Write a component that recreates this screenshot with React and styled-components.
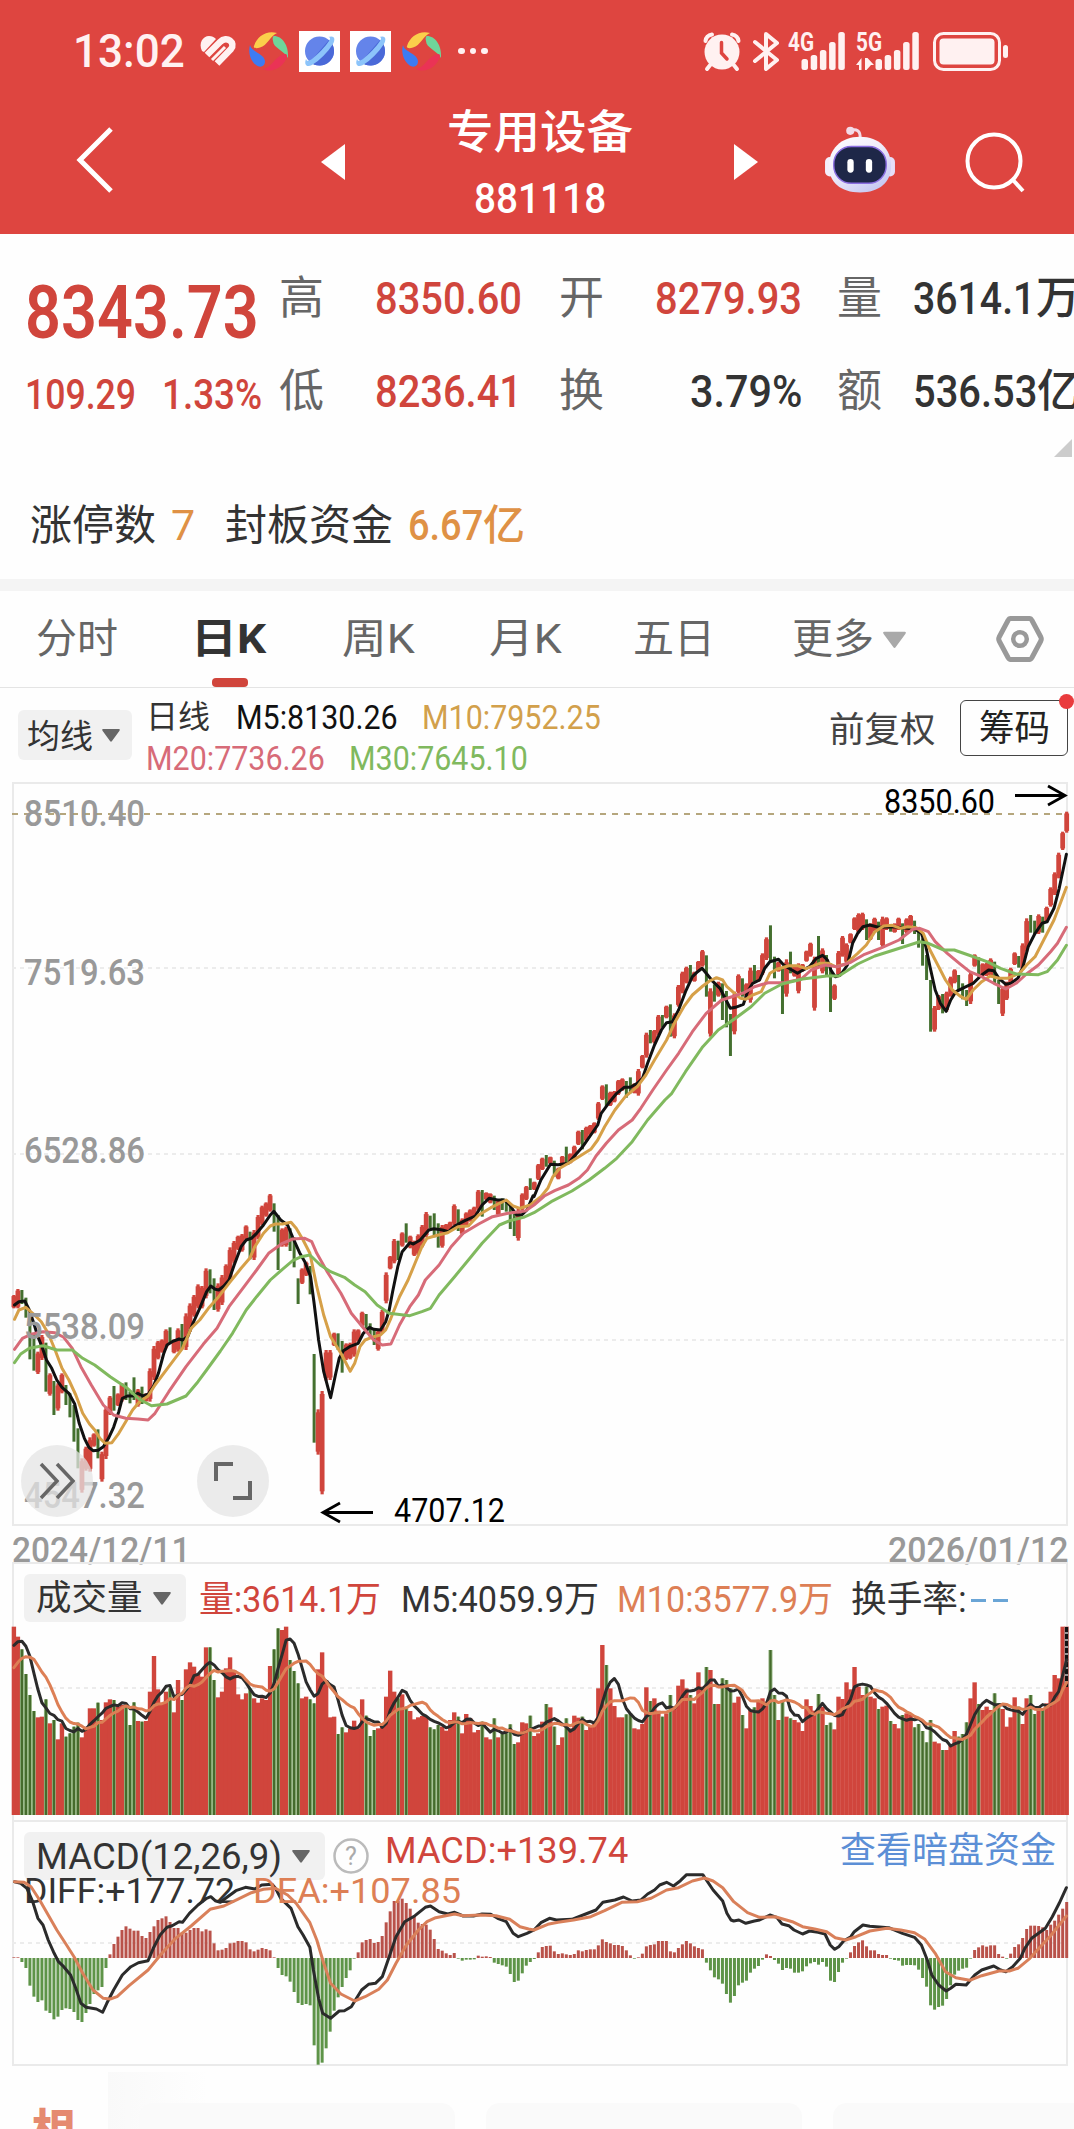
import { useLayoutEffect, useRef, useState } from "react";
import styled, { createGlobalStyle } from "styled-components";

const RED = "#d0453c";
const FONT = `Roboto, "Noto Sans CJK SC", sans-serif`;

/* ---------- chart data ---------- */

// candles: r = up, g = down, then high/low in third-pixels below the base line
const CANDLES_A =
    "r435,475 r417,475 g420,462 g443,503 g490,628 g550,662 r605,672 r555,630 g578,725 r670,737 g693,795 r700,782 r670,730 g705,765 g730,802 g765,875 g835,955 r925,1028 r890,962 r862,965 r850,890 g838,925 r905,995 r770,927 r738,795 g708,782 r730,768 r700,755 g697,750 g725,760 g682,750 r717,770 g710,762 r730,755 r655,755 r588,690 r573,628 r568,608 r538,595 g532,580 r568,610 r535,605 g522,598 r490,600 r460,545 r435,500 r403,475 r408,475 r355,445 g358,430 g385,480 r400,485 r375,465 r343,405 r292,390 r273,340 r257,300 r252,305 r226,270 g245,328 r240,330 r195,268 r167,225 r157,200 r132,185 g160,245 g195,360 r235,290 r230,290 g235,303 g262,352 g385,462 r355,402 r335,378 g348,433 g612,878 r778,914 r723,1033 r600,692 r600,690 r548,588 g550,600 g573,668 r580,630 r578,628 r538,620 r538,575 r485,530 g492,548 g520,560 g535,585 r540,602 r480,550 r367,460 r318,358 r267,340 g272,330 r247,290 g220,278 r257,295 r272,318 r253,315 r225,292 r186,262 g197,235 g190,262 g220,293 r225,293 r222,250 r215,240 r163,225 g178,243 r205,255 r187,230 r178,215 r170,205 r120,180 g120,200 r127,150 r130,160 g137,180 r150,197 g145,180 g150,185 g165,237 g190,258 r175,272 r130,180 r108,150 g85,120 r95,120";
const CANDLES_B =
    "r1092,1140 r1073,1110 g1065,1100 r1070,1092 g1082,1130 r1103,1138 r1068,1098 g1040,1095 r1060,1090 r1037,1078 r992,1035 g990,1048 r980,1025 r975,1005 r967,1000 r906,960 r856,900 g853,918 r875,918 r873,907 r840,885 r835,872 g843,893 g832,880 r850,880 r807,887 r765,805 r698,773 g690,730 r690,730 r645,705 g645,683 r617,655 g613,710 r640,715 r555,620 r515,580 r500,550 g495,542 r515,545 r483,515 r450,500 g466,590 r565,710 g553,605 r545,590 g550,660 g573,682 g642,768 r575,703 r523,580 g535,590 r550,590 r503,608 g495,545 r510,545 r460,525 r412,480 g376,485 g470,535 r485,515 g505,642 r478,590 g455,520 r495,530 r490,580 r492,515 r452,485 r428,470 r470,632 g408,500 r445,520 g465,530 g490,636 r553,600 r453,530 r408,470 r430,490 r400,430 r352,390 r340,400 r338,390 g358,420 r370,420 r353,395 g365,420 r350,443 r352,390 g372,395 r370,398 r353,390 g370,432 r355,400 r345,380 g362,402 g383,443 g415,497 g465,540 g540,695 r618,695 r585,630 g582,640 r575,635 r530,590 r508,550 g525,570 g550,598 g570,618 r515,612 r463,500 g472,530 r490,530 r488,528 r475,530 g485,550 g540,612 r560,648 r545,600 r503,552 r457,495 g468,503 r430,510 r355,455 g345,398 g362,402 r343,402 g350,398 r320,368 r262,320 r217,285 r158,235 r95,150 r35,98";

const VOLUME = [
    320, 350, 388, 462, 525, 573, 592, 590, 538, 610, 600, 658, 610, 650, 640, 620, 608, 652, 620, 565, 565, 548, 600, 547,
    538, 540, 560, 555, 560, 615, 547, 603, 605, 603, 515, 408, 508, 548, 515, 505, 577, 480, 540, 448, 427, 440, 460, 470,
    382, 382, 480, 532, 515, 445, 412, 450, 523, 538, 520, 505, 535, 548, 535, 540, 438, 388, 325, 330, 320, 420, 453, 490,
    535, 530, 538, 550, 448, 397, 480, 592, 590, 642, 622, 637, 625, 602, 625, 538, 587, 648, 630, 625, 620, 530, 452, 515,
    535, 523, 560, 573, 598, 592, 588, 590, 622, 628, 615, 620, 632, 600, 577, 590, 640, 582, 595, 637, 630, 605, 652, 658,
    595, 652, 638, 640, 613, 672, 667, 607, 610, 587, 648, 640, 605, 552, 562, 620, 675, 652, 595, 625, 587, 593, 590, 630,
    620, 612, 505, 375, 435, 505, 558, 592, 592, 583, 580, 625, 628, 612, 502, 543, 535, 572, 590, 580, 525, 560, 497, 478,
    505, 525, 550, 457, 500, 441, 450, 552, 552, 475, 480, 505, 548, 530, 585, 625, 570, 562, 540, 535, 545, 390, 525, 600,
    540, 590, 595, 600, 607, 633, 538, 558, 572, 522, 560, 615, 608, 628, 530, 537, 487, 508, 441, 500, 525, 500, 530, 535,
    567, 560, 557, 603, 612, 625, 585, 580, 583, 622, 612, 633, 667, 600, 665, 670, 690, 690, 675, 633, 650, 642, 607, 535,
    487, 552, 570, 560, 570, 520, 550, 567, 620, 592, 532, 560, 612, 535, 525, 582, 560, 567, 550, 515, 465, 475, 320, 320,
].map((v) => 885 - v);

const MACD = [
    2, 2, -12, -30, -83, -116, -132, -127, -158, -165, -184, -176, -156, -151, -153, -162, -186, -192, -165, -138, -108,
    -97, -87, -30, 11, 42, 64, 84, 95, 88, 82, 82, 66, 60, 78, 95, 114, 119, 125, 108, 90, 90, 76, 76, 84, 90, 90, 80, 86,
    82, 44, 23, 25, 30, 44, 46, 51, 51, 47, 26, 20, 25, 30, 27, 23, 2, -30, -51, -55, -71, -102, -135, -141, -138, -142,
    -262, -320, -314, -271, -221, -158, -118, -87, -60, -37, -2, 17, 47, 54, 57, 45, 48, 66, 107, 140, 171, 171, 178, 165,
    148, 125, 106, 102, 100, 85, 57, 27, 22, 14, 9, 15, -2, -8, -5, -5, -4, 7, 4, 5, 3, -14, -18, -22, -26, -48, -72, -68,
    -46, -23, -12, -3, 17, 33, 36, 37, 20, 12, 14, 11, 9, 12, 23, 20, 24, 26, 26, 38, 56, 48, 44, 39, 39, 36, 23, 8, -2, 2,
    13, 35, 39, 41, 51, 51, 51, 20, 17, 30, 41, 51, 44, 35, 30, 26, -14, -37, -58, -64, -77, -108, -134, -114, -82, -74,
    -68, -44, -32, -24, -5, 11, 6, -6, -17, -36, -30, -32, -44, -44, -40, -25, -16, -12, -20, -12, -26, -68, -72, -42, -14,
    -2, 17, 36, 47, 53, 35, 23, 23, 12, 9, 9, -2, -6, -8, -23, -21, -21, -22, -35, -60, -86, -142, -155, -147, -143, -123,
    -82, -50, -38, -32, -29, -2, 24, 32, 38, 34, 38, 38, 12, 4, -2, 13, 33, 41, 60, 87, 97, 97, 96, 92, 84, 100, 112, 130,
    148, 168,
];

// every line is kept as [first half, second half]
const MA5 = [
    "42,465 55,455 72,453 85,480 98,520 110,560 122,590 135,630 150,655 165,690 180,712 200,730 217,762 230,820 245,865 258,892 270,902 285,901 300,890 315,865 330,832 345,785 355,745 370,738 385,738 400,730 415,738 430,733 445,710 460,670 475,612 485,585 500,575 520,567 530,570 545,560 560,520 580,475 600,425 612,408 625,418 635,420 650,408 665,390 680,345 700,290 715,270 730,265 745,250 765,225 785,195 795,184 815,210 835,225 850,262 870,308 885,335 902,380 912,460 925,570 940,665 960,743 975,670 985,625 997,602 1015,590 1040,580 1055,550 1073,532 1085,538 1105,540 1120,515 1130,480 1140,425 1155,350 1168,305 1190,278 1200,282 1220,270 1245,240 1260,236 1285,240 1302,245 1320,228 1350,212 1380,198 1400,165 1420,145 1445,150 1465,150 1480,165 1500,195 1515,195 1530,180 1548,137",
    "0,1190 20,1140 48,1093 70,1094 100,1090 120,1065 140,1042 165,1005 185,975 195,940 220,905 240,880 262,862 280,862 300,850 315,835 330,790 350,735 370,690 385,668 402,665 420,630 440,575 460,530 475,515 488,505 500,520 520,545 540,565 555,595 570,625 585,622 608,613 620,575 635,550 655,540 670,505 685,485 710,478 725,495 745,508 765,520 785,508 800,500 820,475 838,466 852,480 862,510 875,530 890,525 910,495 925,430 940,400 955,380 975,375 1000,382 1040,380 1070,383 1105,387 1125,400 1138,440 1150,500 1165,570 1180,610 1197,634 1210,600 1225,575 1250,562 1275,550 1300,525 1320,510 1335,512 1350,535 1370,553 1385,550 1405,535 1420,500 1435,440 1455,400 1475,370 1490,365 1510,325 1525,265 1546,163",
];
const MA10 = [
    "42,508 55,480 75,472 95,490 120,515 140,550 160,600 180,655 200,690 220,735 240,790 260,822 275,840 290,865 305,880 325,878 345,850 365,815 385,780 405,755 430,738 450,705 490,650 530,595 555,535 580,510 605,475 635,440 665,400 700,355 725,325 740,290 765,250 785,228 800,222 820,222 845,217 860,235 880,270 900,310 920,410 940,495 960,560 990,610 1017,664 1030,640 1045,590 1060,570 1085,560 1105,555 1120,540 1135,505 1160,440 1185,390 1205,340 1225,290 1240,265 1270,256 1300,248 1330,230 1360,228 1390,195 1425,173 1470,150 1490,168 1510,175 1540,165",
    "0,1206 20,1190 40,1165 55,1130 75,1105 100,1090 130,1070 165,1048 185,1020 205,980 235,930 265,890 300,860 325,825 350,780 385,720 410,665 435,620 460,585 490,558 510,543 530,533 548,540 560,560 580,578 600,595 615,598 635,585 660,575 685,520 705,508 740,497 765,497 790,506 830,490 855,490 875,500 905,492 940,460 965,435 990,395 1015,378 1040,376 1065,385 1085,380 1110,383 1130,400 1150,450 1175,500 1195,540 1215,570 1240,590 1255,598 1275,570 1300,545 1325,528 1350,535 1375,535 1410,520 1435,490 1455,470 1480,420 1510,360 1546,262",
];
const MA20 = [
    "42,598 65,565 90,553 125,545 160,548 185,562 210,595 235,650 265,705 300,765 330,795 365,805 400,807 430,810 450,790 490,725 540,650 590,583 630,535 665,470 705,415 745,360 780,310 820,280 850,267 885,265 905,275 920,310 950,365 990,430 1020,490 1060,540 1085,570 1110,585 1135,582 1160,525 1190,470 1215,435 1235,390 1275,345 1310,290 1345,250 1390,222 1430,200 1475,190 1525,183",
    "0,1215 30,1188 60,1172 100,1155 130,1135 155,1110 180,1068 210,1030 245,990 285,960 310,925 345,870 385,810 420,760 460,695 500,640 545,600 575,590 610,578 640,560 680,548 725,548 775,538 805,510 845,495 880,500 920,487 960,463 1005,445 1060,420 1100,388 1120,385 1145,395 1165,425 1200,460 1235,490 1265,515 1300,530 1335,550 1370,567 1400,550 1430,522 1465,495 1500,455 1520,430 1546,382",
];
const MA30 = [
    "42,638 60,612 85,595 125,587 165,600 210,600 240,625 275,645 320,680 370,715 405,748 440,767 485,762 540,738 575,695 600,660 640,603 675,550 715,480 745,440 785,390 820,358 850,332 875,320 900,315 930,345 960,365 1000,382 1030,405 1060,425 1095,465 1130,490 1190,497 1225,485 1250,475 1275,435 1320,380 1360,330 1400,280 1450,225 1480,212 1520,202",
    "0,1238 50,1205 110,1173 160,1140 205,1105 240,1075 285,1025 330,960 380,900 400,880 440,815 490,740 535,690 585,655 630,620 670,580 720,552 780,537 850,528 885,528 940,492 990,468 1045,450 1120,425 1145,430 1190,450 1220,450 1270,468 1315,485 1355,505 1400,522 1465,524 1490,515 1520,480 1546,436",
];
const DIFF = [
    "42,185 60,190 78,205 95,245 110,295 125,315 140,360 155,395 170,425 185,440 205,465 220,505 235,550 250,562 280,567 298,577 310,550 330,510 355,465 380,440 402,428 430,422 445,385 465,345 485,322 500,317 520,305 530,307 550,280 575,255 600,235 612,230 625,242 640,247 655,235 685,212 713,202 740,207 760,195 790,193 800,205 815,235 845,265 865,320 880,345 900,382 910,450 925,535 937,580 960,595 985,573 1000,572 1020,560 1050,510 1070,493 1090,490 1110,470 1130,410 1150,350 1175,305 1205,287 1235,262 1250,258 1275,275 1300,282 1320,277 1345,288 1375,288 1400,282 1425,283 1445,295 1470,305 1490,340 1505,350 1530,340",
    "0,330 20,308 45,295 65,300 110,298 150,282 180,270 200,247 235,240 260,231 285,243 310,240 330,222 350,210 365,195 385,187 405,198 425,182 443,164 490,164 520,210 548,243 560,280 572,300 580,303 595,300 615,310 640,303 655,300 685,285 705,292 720,312 740,317 755,330 780,342 800,333 825,337 845,342 860,375 873,388 885,380 900,362 920,350 930,335 955,315 975,319 1030,323 1070,340 1105,352 1125,375 1142,420 1155,465 1175,495 1197,513 1210,505 1225,493 1255,495 1280,465 1300,450 1335,438 1355,450 1370,455 1390,440 1412,415 1425,385 1445,355 1485,325 1505,290 1525,250 1546,203",
];
const DEA = [
    "42,185 70,187 90,200 115,240 140,285 165,330 190,370 215,410 240,460 270,510 300,535 320,537 340,530 375,497 430,450 470,400 510,355 555,318 610,268 650,258 690,238 730,218 765,208 800,205 835,225 860,250 900,308 920,360 940,430 960,490 990,522 1030,543 1060,530 1100,508 1125,480 1150,430 1180,375 1215,330 1240,305 1265,293 1320,282 1345,287 1395,285 1440,287 1480,298 1510,320 1535,327",
    "0,330 40,313 70,307 115,300 165,290 205,272 255,247 300,245 340,235 385,210 420,203 460,183 495,174 520,183 548,203 580,245 620,278 655,292 700,290 750,305 780,320 815,327 850,335 875,353 905,360 935,350 975,333 1025,325 1065,330 1105,338 1135,358 1165,400 1195,455 1225,473 1265,481 1300,467 1350,453 1380,453 1405,445 1440,415 1470,380 1500,347 1525,315 1546,288",
];

const barX = (i) => 13.9 + i * 4.003;

const toPoints = ([a, b], baseA, baseB) => {
    const half = (src, x0, y0) =>
        src.split(" ").map((p) => {
            const [x, y] = p.split(",").map(Number);
            return `${(x0 + x / 2.9037).toFixed(1)},${(y0 + y / 3).toFixed(1)}`;
        });
    return [...half(a, 0, baseA), ...half(b, 534, baseB)].join(" ");
};

const parseCandles = (src, base) =>
    src.split(" ").map((c) => {
        const [high, low] = c.slice(1).split(",").map(Number);
        return { up: c[0] === "r", high: base + high / 3, low: base + low / 3 };
    });

const candles = [...parseCandles(CANDLES_A, 1150), ...parseCandles(CANDLES_B, 800)];

const average = (n) => {
    const all = [375, 375, 375, 375, 375, 480, 490, 500, 510, ...VOLUME];
    return VOLUME.map((_, i) => {
        const part = all.slice(i + 10 - n, i + 10);
        const h = part.reduce((s, v) => s + v, 0) / n;
        return `${barX(i).toFixed(1)},${(1815 - h / 3).toFixed(1)}`;
    }).join(" ");
};

/* ---------- text ---------- */

// squeezes its text to a given width, for the narrow DIN-like figures
function Fit({ w, children, ...rest }) {
    const ref = useRef(null);
    const [scale, setScale] = useState(1);

    useLayoutEffect(() => {
        setScale(w / ref.current.offsetWidth);
    }, [w]);

    return (
        <FitBox $w={w} {...rest}>
            <FitText ref={ref} style={{ transform: `scaleX(${scale})` }}>
                {children}
            </FitText>
        </FitBox>
    );
}

function Label({ x, y, w, size = 36.5, fill = "#999", weight = 400, children }) {
    return (
        <text x={x} y={y} textLength={w} lengthAdjust="spacingAndGlyphs" fontSize={size} fontWeight={weight} fill={fill}>
            {children}
        </text>
    );
}

/* ---------- icons ---------- */

const Pinwheel = () => (
    <svg width="40" height="40" viewBox="0 0 40 40">
        <path d="M5 15C8 5 18-1 28 2C22 4 18 15 11 16.500C7 18 4 17 5 15Z" fill="#fbcf4b" />
        <path d="M25 5C33 5 40 14 39 27C36 20 24 17 24 10C23 7 24 5 25 5Z" fill="#6fd59a" />
        <path d="M38 25C36 35 24 43 14 38C22 37 26 26 33 24C37 22 38 23 38 25Z" fill="#ea3355" />
        <path d="M1 14C2 21 15 22 16 30C16 36 11 37 7 34C1 29-1 21 1 14Z" fill="#3d7bf2" />
    </svg>
);

const Planet = () => (
    <PlanetTile>
        <svg width="32" height="32" viewBox="0 0 32 32">
            <circle cx="15.500" cy="16" r="14.500" fill="#6484ea" />
            <path d="M25 5A14.500 14.500 0 0 1 6 27Z" fill="#4a69d8" />
            <path d="M24 2C30 0 32 3 29 9C23 18 16 25 8 30C2 33 0 29 2 24C3 27 5 26 8 24C14 19 21 12 25 6C27 3 26 2 24 2Z" fill="#8cc4fa" />
        </svg>
    </PlanetTile>
);

const Heart = () => (
    <svg width="36" height="32" viewBox="0 0 36 32">
        <path d="M2 16C-2 8 3 1 9 1C12 1 14 2 16 4L4 17Z" fill="#fff1f1" />
        <g fill="none" stroke="#fff1f1" strokeWidth="6.500">
            <path d="M7 20L20 7C27 0 36 8 31 14L17 28.500" />
        </g>
        <path d="M12 25L25 12" fill="none" stroke="#fff1f1" strokeWidth="3" />
    </svg>
);

const Alarm = () => (
    <svg width="38" height="39" viewBox="0 0 38 39">
        <circle cx="19" cy="20" r="17.500" fill="#fff1f1" />
        <g fill="none" stroke="#fff1f1" strokeWidth="4" strokeLinecap="round">
            <path d="M2.500 9C3 5 6 3 9 2.500M35.500 9C35 5 32 3 29 2.500M8 32L4 37M30 32L34 37" />
        </g>
        <path d="M18.500 10.500V21L24 27" fill="none" stroke="#de4540" strokeWidth="3.500" strokeLinecap="round" />
    </svg>
);

const Bluetooth = () => (
    <svg width="26" height="39" viewBox="0 0 26 39">
        <path d="M2 10L24 28L13 37V2L24 11L2 29" fill="none" stroke="#fff1f1" strokeWidth="4" strokeLinejoin="round" strokeLinecap="round" />
    </svg>
);

const Signal = ({ name, data }) => (
    <svg width={data ? 63 : 58} height="40" viewBox={`0 0 ${data ? 63 : 58} 40`}>
        <text x="0" y="20" textLength="26" lengthAdjust="spacingAndGlyphs" fontSize="25" fontWeight="700" fill="#fff1f1">
            {name}
        </text>
        {data && <path d="M0 34L5.500 27V39H3V34ZM9 27H11.500L18 34H15L10.500 39H9Z" fill="#fff1f1" />}
        {[28, 24, 19, 11, 1].map((top, i) => (
            <rect key={top} x={(data ? 19.500 : 13.500) + i * 9.200} y={top} width="6.500" height={39 - top} rx="2.500" fill="#fff1f1" />
        ))}
    </svg>
);

const Battery = () => (
    <svg width="76" height="39" viewBox="0 0 76 39">
        <rect x="1.500" y="1.500" width="65" height="36" rx="9" fill="none" stroke="#fff1f1" strokeWidth="3" />
        <rect x="6.500" y="6.500" width="55" height="26" rx="4" fill="#fff1f1" />
        <rect x="70" y="13" width="5" height="13" rx="2.500" fill="#fff1f1" />
    </svg>
);

const Robot = () => (
    <svg width="72" height="68" viewBox="0 0 74 70">
        <defs>
            <linearGradient id="shell" x1="0" y1="0" x2="0.700" y2="1">
                <stop offset="0" stopColor="#fff" />
                <stop offset="0.500" stopColor="#f0ecfa" />
                <stop offset="1" stopColor="#c6c8f2" />
            </linearGradient>
        </defs>
        <path d="M27 5C33 2 38 5 37 13" fill="none" stroke="#f3dbe8" strokeWidth="3" />
        <circle cx="27" cy="5" r="4.200" fill="#f3dbe8" />
        <rect x="1" y="32" width="10" height="20" rx="5" fill="#f4eefb" />
        <rect x="63" y="32" width="10" height="20" rx="5" fill="#e6def8" />
        <path d="M37 11C57 11 69 24 69 41C69 58 57 68.500 37 68.500C17 68.500 5 58 5 41C5 24 17 11 37 11Z" fill="url(#shell)" />
        <rect x="10" y="21" width="54" height="38" rx="18" fill="#1e2748" stroke="#8a6de0" strokeWidth="1.500" />
        <rect x="24" y="34" width="6.500" height="14" rx="3.200" fill="#fff" />
        <rect x="43" y="34" width="6.500" height="14" rx="3.200" fill="#fff" />
    </svg>
);

const Search = () => (
    <svg width="60" height="62" viewBox="0 0 60 62">
        <g fill="none" stroke="#fff" strokeWidth="4">
            <circle cx="29" cy="30" r="26.500" />
            <path d="M48 49L58 60" />
        </g>
    </svg>
);

const Caret = ({ w = 18, h = 13, color = "#666" }) => (
    <svg width={w} height={h} viewBox="0 0 18 13">
        <path d="M1 0H17Q18.500 0 17.500 1.800L10 12Q9 13.500 8 12L0.500 1.800Q-0.500 0 1 0Z" fill={color} />
    </svg>
);

const Settings = () => (
    <svg width="50" height="48" viewBox="0 0 50 48">
        <g fill="none" stroke="#999" strokeWidth="5" strokeLinejoin="round">
            <path d="M15.500 3.500H34.500Q36 3.500 37 5.500L45.800 22Q46.800 24 45.800 26L37 42.500Q36 44.500 34.500 44.500H15.500Q14 44.500 13 42.500L4.200 26Q3.200 24 4.200 22L13 5.500Q14 3.500 15.500 3.500Z" />
            <circle cx="25" cy="24" r="6.800" strokeWidth="4.500" />
        </g>
    </svg>
);

/* ---------- page ---------- */

const tabs = [
    { text: "分时", w: 82, ml: 36 },
    { text: "日K", w: 75, ml: 73, active: true },
    { text: "周K", w: 73, ml: 76 },
    { text: "月K", w: 73, ml: 74 },
    { text: "五日", w: 82, ml: 71 },
    { text: "更多", w: 82, ml: 77, caret: true },
];

export default function App() {
    return (
        <Page>
            <GlobalStyle />
            <Header />
            <Quote />
            <Tabs>
                {tabs.map((t) => (
                    <Tab key={t.text} $ml={t.ml} $active={t.active}>
                        <Fit w={t.w}>{t.text}</Fit>
                        {t.caret && <Caret w={23} h={18} color="#a9a9a9" />}
                    </Tab>
                ))}
                <Settings />
            </Tabs>
            <Averages />
            <PriceChart />
            <Dates>
                <Fit w={178}>2024/12/11</Fit>
                <Fit w={180}>2026/01/12</Fit>
            </Dates>
            <VolumeChart />
            <MacdChart />
            <Footer>
                <FooterTitle>相</FooterTitle>
                <Shelf>
                    <Card />
                    <Card />
                    <Card />
                </Shelf>
            </Footer>
        </Page>
    );
}

function Header() {
    return (
        <Top>
            <StatusBar>
                <Fit w={112} $size={46} $weight={500} $ml={73}>13:02</Fit>
                <Icon $ml={15}><Heart /></Icon>
                <Icon $ml={13}><Pinwheel /></Icon>
                <Icon $ml={10}><Planet /></Icon>
                <Icon $ml={10}><Planet /></Icon>
                <Icon $ml={11}><Pinwheel /></Icon>
                <Dots><i /><i /><i /></Dots>
                <Tray>
                    <Alarm />
                    <Icon $ml={12}><Bluetooth /></Icon>
                    <Icon $ml={9}><Signal name="4G" /></Icon>
                    <Icon $ml={10}><Signal name="5G" data /></Icon>
                    <Icon $ml={14}><Battery /></Icon>
                </Tray>
            </StatusBar>
            <Nav>
                <Icon $ml={76} $lift={4}>
                    <svg width="38" height="68" viewBox="0 0 38 68">
                        <path d="M35 3L4 34L35 65" fill="none" stroke="#fff" strokeWidth="5" />
                    </svg>
                </Icon>
                <Icon $ml={207}>
                    <svg width="24" height="36" viewBox="0 0 24 36"><path d="M24 0V36L0 18Z" fill="#fff" /></svg>
                </Icon>
                <Title>
                    <Fit w={186} $size={46}>专用设备</Fit>
                    <Fit w={132} $size={42} $weight={500}>881118</Fit>
                </Title>
                <Icon $ml={0}>
                    <svg width="24" height="36" viewBox="0 0 24 36"><path d="M0 0V36L24 18Z" fill="#fff" /></svg>
                </Icon>
                <Icon $ml={66} $lift={4}><Robot /></Icon>
                <Icon $ml={69}><Search /></Icon>
            </Nav>
        </Top>
    );
}

function Quote() {
    return (
        <>
            <Stats>
                <Price>
                    <Fit w={234} $size={74} $weight={600}>8343.73</Fit>
                    <Line>
                        <Fit w={111} $size={42} $weight={500}>109.29</Fit>
                        <Fit w={100} $size={42} $weight={500} $ml={26}>1.33%</Fit>
                    </Line>
                </Price>
                <StatColumn $w={243}>
                    <Stat>高<Fit w={147} $weight={500} $color={RED}>8350.60</Fit></Stat>
                    <Stat>低<Fit w={147} $weight={500} $color={RED}>8236.41</Fit></Stat>
                </StatColumn>
                <StatColumn $w={243} $ml={37}>
                    <Stat>开<Fit w={147} $weight={500} $color={RED}>8279.93</Fit></Stat>
                    <Stat>换<Fit w={112} $weight={500} $color="#333">3.79%</Fit></Stat>
                </StatColumn>
                <StatColumn $w={243} $ml={35}>
                    <Stat>
                        量
                        <Line>
                            <Fit w={122} $weight={500} $color="#333">3614.1</Fit>
                            <Fit w={44} $weight={500} $color="#333" $ml={1}>万</Fit>
                        </Line>
                    </Stat>
                    <Stat>
                        额
                        <Line>
                            <Fit w={124} $weight={500} $color="#333">536.53</Fit>
                            <Fit w={43} $weight={500} $color="#333">亿</Fit>
                        </Line>
                    </Stat>
                </StatColumn>
            </Stats>
            <Corner>
                <svg width="18" height="18" viewBox="0 0 18 18"><path d="M18 0V18H0Z" fill="#ccc" /></svg>
            </Corner>
            <Limit>
                <Fit w={126}>涨停数</Fit>
                <Fit w={24} $size={43} $ml={15} $color="#df9145">7</Fit>
                <Fit w={168} $ml={30}>封板资金</Fit>
                <Fit w={75} $size={43} $ml={15} $weight={500} $color="#df9145">6.67</Fit>
                <Fit w={42} $weight={500} $color="#df9145">亿</Fit>
            </Limit>
        </>
    );
}

function Averages() {
    return (
        <AverageBar>
            <AverageChip $w={114} $h={50}>
                <Fit w={66} $size={33}>均线</Fit>
                <Caret />
            </AverageChip>
            <Legend>
                <Line>
                    <Fit w={64} $size={32} $color="#333">日线</Fit>
                    <Fit w={162} $ml={26} $color="#111">M5:8130.26</Fit>
                    <Fit w={179} $ml={24} $color="#d2a04b">M10:7952.25</Fit>
                </Line>
                <Line>
                    <Fit w={179} $color="#d76b78">M20:7736.26</Fit>
                    <Fit w={179} $ml={24} $color="#80b95e">M30:7645.10</Fit>
                </Line>
            </Legend>
            <Adjust>前复权</Adjust>
            <ChipsButton>
                <Fit w={71} $size={36}>筹码</Fit>
                <RedDot />
            </ChipsButton>
        </AverageBar>
    );
}

function PriceChart() {
    const lines = [
        [MA30, "#80b95e"],
        [MA20, "#d76b78"],
        [MA10, "#d6a048"],
        [MA5, "#111"],
    ].reverse();
    return (
        <Panel $h={744}>
            <Plot width="1052" height="740" viewBox="14 784 1052 740">
                <g strokeWidth="2">
                    <path d="M12 814H1066" stroke="#b5a67d" strokeDasharray="6 6" />
                    <path d="M12 968H1066M12 1154H1066M12 1340H1066" stroke="#ececec" strokeDasharray="4 4" />
                </g>
                <Label x="24" y="985" w="121" weight={500}>7519.63</Label>
                <Label x="24" y="1163" w="121" weight={500}>6528.86</Label>
                <Label x="24" y="1508" w="121" weight={500}>4547.32</Label>
                {candles.map((c, i) => {
                    const wick = Math.min(6, (c.low - c.high) / 6);
                    return c.up ? (
                        <g key={i} fill={RED}>
                            <rect x={barX(i) - 1.600} y={c.high} width="3.200" height={c.low - c.high} />
                            <rect x={barX(i) - 2.400} y={c.high + wick / 2} width="4.800" height={c.low - c.high - wick} />
                        </g>
                    ) : (
                        <rect key={i} x={barX(i) - 1.500} y={c.high} width="3" height={c.low - c.high} fill="#44702f" />
                    );
                })}
                {lines.map(([line, color]) => (
                    <polyline key={color} points={toPoints(line, 1150, 800)} stroke={color} />
                ))}
                <Label x="24" y="1339" w="121" weight={500}>5538.09</Label>
                <Label x="24" y="826" w="121" weight={500}>8510.40</Label>
                <Label x="884" y="813" w="111" size="33" fill="#000">8350.60</Label>
                <Label x="394" y="1521.500" w="111" size="33" fill="#000">4707.12</Label>
                <path d="M1015 795.500H1064M1048 786L1065 795.500L1048 805M373 1512.500H324M340 1503L323 1512.500L340 1522" fill="none" stroke="#000" strokeWidth="2.800" />
            </Plot>
            <Tools>
                <RoundButton>
                    <svg width="36" height="38" viewBox="0 0 36 38">
                        <path d="M2 2L18 19L2 36M18 2L34 19L18 36" fill="none" stroke="#666" strokeWidth="3.500" />
                    </svg>
                </RoundButton>
                <RoundButton>
                    <svg width="38" height="38" viewBox="0 0 38 38">
                        <path d="M2 19V2H19M36 19V36H19" fill="none" stroke="#666" strokeWidth="4" />
                    </svg>
                </RoundButton>
            </Tools>
        </Panel>
    );
}

function VolumeChart() {
    return (
        <Panel $h={258} $open>
            <PanelHead $pt={10}>
                <Chip $w={162} $h={48} $ml={10}>
                    <Fit w={107} $size={35.5} $drop={2}>成交量</Fit>
                    <Caret />
                </Chip>
                <Readout>
                    <Fit w={35} $ml={13} $color={RED}>量</Fit>
                    <Fit w={112} $color={RED}>:3614.1</Fit>
                    <Fit w={35} $color={RED}>万</Fit>
                    <Fit w={163} $ml={20} $color="#333">M5:4059.9</Fit>
                    <Fit w={35} $color="#333">万</Fit>
                    <Fit w={181} $ml={18} $color="#dd7f55">M10:3577.9</Fit>
                    <Fit w={35} $color="#dd7f55">万</Fit>
                    <Fit w={107} $ml={18} $color="#333">换手率</Fit>
                    <Fit w={9} $color="#333">:</Fit>
                    <Dash $ml={4} /><Dash $ml={7} />
                </Readout>
            </PanelHead>
            <Plot width="1052" height="196" viewBox="14 1624 1052 196">
                <path d="M12 1688H1066" stroke="#ececec" strokeWidth="2" strokeDasharray="4 4" />
                {VOLUME.map((v, i) =>
                    candles[i].up ? (
                        <rect key={i} x={barX(i) - 2.200} y={1815 - v / 3} width="4.400" height={v / 3} fill={RED} />
                    ) : (
                        <g key={i}>
                            <rect x={barX(i) - 2} y={1815 - v / 3} width="4" height={v / 3} fill="#95b582" />
                            <rect x={barX(i) - 1.100} y={1815 - v / 3} width="2.200" height={v / 3} fill="#456b2c" />
                        </g>
                    )
                )}
                <path d="M1066.500 1627V1687" stroke="#999" strokeWidth="4" />
                <path d="M1066.500 1627V1687" stroke="#111" strokeWidth="3" strokeDasharray="5 2" />
                <polyline points={average(5)} stroke="#2b2b2b" />
                <polyline points={average(10)} stroke="#dd7f55" />
            </Plot>
        </Panel>
    );
}

function MacdChart() {
    return (
        <Panel $h={246}>
            <PanelHead $pt={10}>
                <Chip $w={301} $h={48} $ml={10}>
                    <Fit w={246} $size={37}>MACD(12,26,9)</Fit>
                    <Caret />
                </Chip>
                <Icon $ml={8}>
                    <svg width="36" height="36" viewBox="0 0 36 36">
                        <circle cx="18" cy="18" r="16.500" fill="none" stroke="#bbb" strokeWidth="2.500" />
                        <text x="18" y="27" textAnchor="middle" fontSize="25" fill="#aaa">?</text>
                    </svg>
                </Icon>
                <MacdValue>
                    <Fit w={243} $size={36.5} $color={RED}>MACD:+139.74</Fit>
                </MacdValue>
                <DarkLink>查看暗盘资金</DarkLink>
            </PanelHead>
            <Plot width="1052" height="182" viewBox="14 1882 1052 182">
                <path d="M12 1943H1066" stroke="#ececec" strokeWidth="2" strokeDasharray="4 4" />
                {MACD.map((v, i) => (
                    <rect
                        key={i}
                        x={barX(i) - 1.500}
                        y={v > 0 ? 1958 - v / 3 : 1958}
                        width="3"
                        height={Math.abs(v) / 3}
                        fill={v > 0 ? "#b9524a" : "#5e9448"}
                    />
                ))}
                <Label x="24" y="1903" w="211" size="35.500" fill="#333">DIFF:+177.72</Label>
                <polyline points={toPoints(DIFF, 1820, 1820)} stroke="#2b2b2b" />
                <Label x="253" y="1903" w="208" size="35.500" fill="#dd7f55">DEA:+107.85</Label>
                <polyline points={toPoints(DEA, 1820, 1820)} stroke="#d9805a" />
            </Plot>
        </Panel>
    );
}

/* ---------- styles ---------- */

const GlobalStyle = createGlobalStyle`
    * {
        box-sizing: border-box;
    }
    body {
        margin: 0;
        background: #fefefe;
        font-family: ${FONT};
        line-height: 1;
    }
    svg {
        display: block;
        flex: none;
        overflow: visible;
    }
`;

const Page = styled.div`
    width: 1074px;
    height: 2129px;
    overflow: hidden;
    background: #fefefe;
    color: #333;
`;

const FitBox = styled.span`
    display: block;
    flex: none;
    width: ${(p) => p.$w}px;
    margin-left: ${(p) => p.$ml || 0}px;
    padding-top: ${(p) => p.$drop || 0}px;
    font-size: ${(p) => (p.$size ? `${p.$size}px` : "inherit")};
    font-weight: ${(p) => p.$weight || "inherit"};
    color: ${(p) => p.$color || "inherit"};
    white-space: nowrap;
`;

const FitText = styled.span`
    display: inline-block;
    transform-origin: 0 50%;
    vertical-align: top;
`;

const Line = styled.div`
    display: flex;
    align-items: center;
`;

const Icon = styled.div`
    flex: none;
    margin-left: ${(p) => p.$ml}px;
    padding-bottom: ${(p) => p.$lift || 0}px;
`;

const Top = styled.header`
    height: 234px;
    background: #de4540;
    color: #fff;
`;

const StatusBar = styled.div`
    display: flex;
    align-items: center;
    height: 102px;
    color: #fff1f1;
`;

const PlanetTile = styled.div`
    display: flex;
    align-items: center;
    justify-content: center;
    width: 41px;
    height: 41px;
    background: #fff;
`;

const Dots = styled.div`
    display: flex;
    gap: 5px;
    margin-left: 16px;
    i {
        width: 6.5px;
        height: 6.5px;
        border-radius: 50%;
        background: #fff1f1;
    }
`;

const Tray = styled.div`
    display: flex;
    align-items: center;
    margin-left: auto;
    padding-right: 65px;
`;

const Nav = styled.nav`
    display: flex;
    align-items: center;
    height: 120px;
`;

const Title = styled.div`
    display: flex;
    flex-direction: column;
    align-items: center;
    align-self: flex-start;
    gap: 23px;
    width: 389px;
    padding-top: 7px;
    font-weight: 500;
`;

const Stats = styled.section`
    display: flex;
    height: 205px;
`;

const Price = styled.div`
    display: flex;
    flex: none;
    flex-direction: column;
    gap: 24px;
    width: 279px;
    padding: 42px 0 0 25px;
    color: ${RED};
`;

const StatColumn = styled.div`
    display: flex;
    flex: none;
    flex-direction: column;
    gap: 48px;
    width: ${(p) => p.$w}px;
    margin-left: ${(p) => p.$ml || 0}px;
    padding-top: 42px;
`;

const Stat = styled.div`
    display: flex;
    align-items: center;
    justify-content: space-between;
    height: 45px;
    font-size: 45px;
    color: #666;
`;

const Corner = styled.div`
    display: flex;
    justify-content: flex-end;
    height: 18px;
    padding-right: 2px;
`;

const Limit = styled.section`
    display: flex;
    align-items: center;
    height: 134px;
    padding: 15px 0 0 30px;
    border-bottom: 12px solid #f4f4f4;
    font-size: 42px;
`;

const Tabs = styled.div`
    display: flex;
    align-items: center;
    height: 97px;
    border-bottom: 1px solid #e4e4e4;
    font-size: 41px;
    > svg {
        margin: 0 29px 0 auto;
    }
`;

const Tab = styled.div`
    position: relative;
    display: flex;
    align-items: center;
    gap: 9px;
    height: 100%;
    padding-top: 1px;
    margin-left: ${(p) => p.$ml}px;
    color: ${(p) => (p.$active ? "#333" : "#666")};
    font-weight: ${(p) => (p.$active ? 700 : 400)};
    &::after {
        content: "";
        display: ${(p) => (p.$active ? "block" : "none")};
        position: absolute;
        bottom: 0;
        left: 21px;
        width: 36px;
        height: 9px;
        border-radius: 4px;
        background: ${RED};
    }
`;

const AverageBar = styled.div`
    display: flex;
    align-items: flex-start;
    height: 94px;
    padding: 12px 0 0 18px;
`;

const Chip = styled.div`
    display: flex;
    flex: none;
    align-items: center;
    justify-content: space-between;
    width: ${(p) => p.$w}px;
    height: ${(p) => p.$h}px;
    margin-left: ${(p) => p.$ml || 0}px;
    padding: 0 ${(p) => (p.$ml ? 15 : 12)}px 0 ${(p) => (p.$ml ? 12 : 9)}px;
    border-radius: 6px;
    background: #f1f1f1;
    color: #333;
`;

const AverageChip = styled(Chip)`
    margin-top: 10px;
    ${FitBox} {
        padding-top: 2px;
    }
`;

const Legend = styled.div`
    flex: none;
    width: 640px;
    margin: -12px 0 0 14px;
    padding-top: 8px;
    font-size: 34px;
    ${Line} {
        height: 41px;
    }
`;

const Adjust = styled.div`
    flex: none;
    width: 131px;
    margin: 13px 0 0 43px;
    font-size: 35.5px;
    color: #444;
    white-space: nowrap;
`;

const ChipsButton = styled.div`
    position: relative;
    display: flex;
    flex: none;
    align-items: center;
    justify-content: center;
    width: 108px;
    height: 56px;
    padding-top: 2px;
    margin-left: 114px;
    margin-left: 0;
    border: 1px solid #444;
    border-radius: 6px;
    color: #222;
`;

const RedDot = styled.i`
    position: absolute;
    top: -7px;
    right: -7px;
    width: 15px;
    height: 15px;
    border-radius: 50%;
    background: #e93b3d;
`;

const Panel = styled.section`
    position: relative;
    width: 1056px;
    height: ${(p) => p.$h}px;
    margin-left: 12px;
    border: 2px solid #eaeaea;
    border-bottom-width: ${(p) => (p.$open ? 0 : 2)}px;
`;

const Plot = styled.svg`
    position: relative;
    font-family: ${FONT};
    polyline {
        fill: none;
        stroke-width: 3;
        stroke-linejoin: round;
        stroke-linecap: round;
    }
`;

const Tools = styled.div`
    position: absolute;
    left: 7px;
    bottom: 7px;
    display: flex;
    gap: 104px;
`;

const RoundButton = styled.div`
    display: flex;
    align-items: center;
    justify-content: center;
    width: 72px;
    height: 72px;
    border-radius: 50%;
    background: rgba(228, 228, 228, 0.75);
`;

const Dates = styled.div`
    display: flex;
    justify-content: space-between;
    height: 36px;
    padding: 7px 6px 0 12px;
    font-size: 35px;
    font-weight: 500;
    color: #999;
`;

const PanelHead = styled.div`
    display: flex;
    height: 60px;
    padding-top: ${(p) => p.$pt}px;
    ${Icon} {
        padding-top: 6px;
    }
`;

const Readout = styled.div`
    display: flex;
    align-items: center;
    height: 51px;
    font-size: 36px;
`;

const Dash = styled.i`
    width: 15px;
    height: 3px;
    margin: 2px 0 0 ${(p) => p.$ml}px;
    background: #6aa5d6;
`;

const MacdValue = styled.div`
    margin: 1px 0 0 16px;
`;

const DarkLink = styled.div`
    margin-left: auto;
    padding: 1px 10px 0 0;
    font-size: 36px;
    color: #5c8fd6;
    white-space: nowrap;
`;

const Footer = styled.footer`
    display: flex;
    height: 63px;
    padding-top: 6px;
    overflow: hidden;
`;

const FooterTitle = styled.div`
    flex: none;
    width: 108px;
    padding: 37px 0 0 32px;
    font-size: 43px;
    font-weight: 900;
    color: #e58a70;
`;

const Shelf = styled.div`
    display: flex;
    flex: none;
    gap: 31px;
    width: 966px;
    padding: 31px 0 0 31px;
    overflow: hidden;
    background: linear-gradient(90deg, #f9f9f9, #fefefe 100px);
`;

const Card = styled.div`
    flex: none;
    width: 316px;
    height: 80px;
    border-radius: 14px;
    background: #fafafa;
`;
